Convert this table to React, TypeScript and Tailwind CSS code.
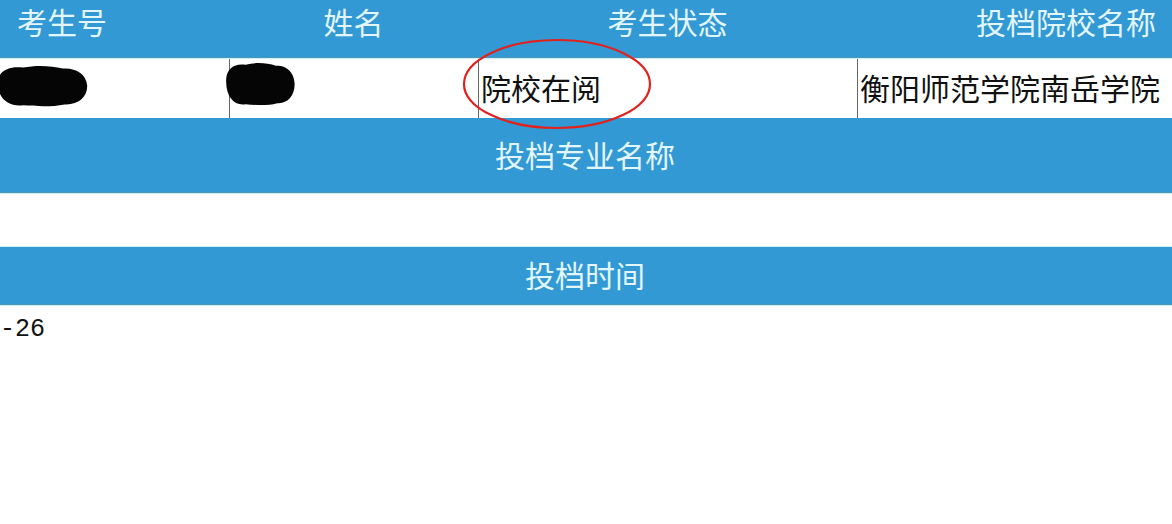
const cjk = "font-['Noto_Sans_CJK_SC','Noto_Sans',sans-serif]";

const headers = ["考生号", "姓名", "考生状态", "投档院校名称"];

function Blob({ className }: { className: string }) {
  // 涂黑遮挡的姓名/考号
  return (
    <svg className={className} viewBox="0 0 100 50" preserveAspectRatio="none">
      <path
        d="M3 20 C4 8 16 3 30 5 C44 2 60 3 72 6 C86 5 97 12 98 24 C99 37 88 46 74 45 C60 48 44 47 30 46 C14 48 2 38 3 20 Z"
        fill="#050505"
      />
    </svg>
  );
}

export default function App() {
  return (
    <div className={`relative w-[1172px] h-[524px] overflow-hidden bg-white ${cjk}`}>
      <div className="ml-[-105px] w-[1380px]">
        {/* 表头 */}
        <div className="grid grid-cols-[334px_249px_379px_418px] h-[58px] bg-[#3399d4] border-b border-[#4d97b3]">
          {headers.map((h) => (
            <div key={h} className="pt-[6px] text-center text-[30px] leading-[30px] text-[#e2f6ff]">
              {h}
            </div>
          ))}
        </div>
        <div className="h-px bg-[#c9f0fd]" />
        {/* 数据行 */}
        <div className="grid grid-cols-[334px_249px_379px_418px] h-[59px] bg-white text-[30px] leading-[30px] text-[#111]">
          <div className="relative">
            <Blob className="absolute left-[100px] top-[4px] w-[94px] h-[46px]" />
          </div>
          <div className="relative border-l border-[#666]">
            <Blob className="absolute left-[-6px] top-[1px] w-[72px] h-[48px]" />
          </div>
          <div className="border-l border-[#666] pl-[2px] pt-[13px]">院校在阅</div>
          <div className="border-l border-[#666] pl-[2px] pt-[13px]">衡阳师范学院南岳学院</div>
        </div>
        {/* 投档专业名称 */}
        <div className="h-[75px] bg-[#3399d4] border-b border-[#4d97b3] pt-[21px] text-center text-[30px] leading-[30px] text-[#e2f6ff]">
          投档专业名称
        </div>
        <div className="h-px bg-[#c9f0fd]" />
        <div className="h-[52px] bg-white" />
        <div className="h-px bg-[#c9f0fd]" />
        {/* 投档时间 */}
        <div className="h-[58px] bg-[#3399d4] border-b border-[#4d97b3] pt-[12px] text-center text-[30px] leading-[30px] text-[#e2f6ff]">
          投档时间
        </div>
        <div className="h-px bg-[#c9f0fd]" />
      </div>
      <div className="pt-[9px] font-['Liberation_Mono',monospace] text-[25px] leading-[30px] text-[#111]">
        -26
      </div>
      {/* 红色圈注 */}
      <svg className="pointer-events-none absolute left-[460px] top-[37px] w-[194px] h-[94px]" viewBox="0 0 194 94">
        <ellipse cx="97" cy="47" rx="93" ry="44" fill="none" stroke="#e0221e" strokeWidth="2.2" />
      </svg>
    </div>
  );
}
